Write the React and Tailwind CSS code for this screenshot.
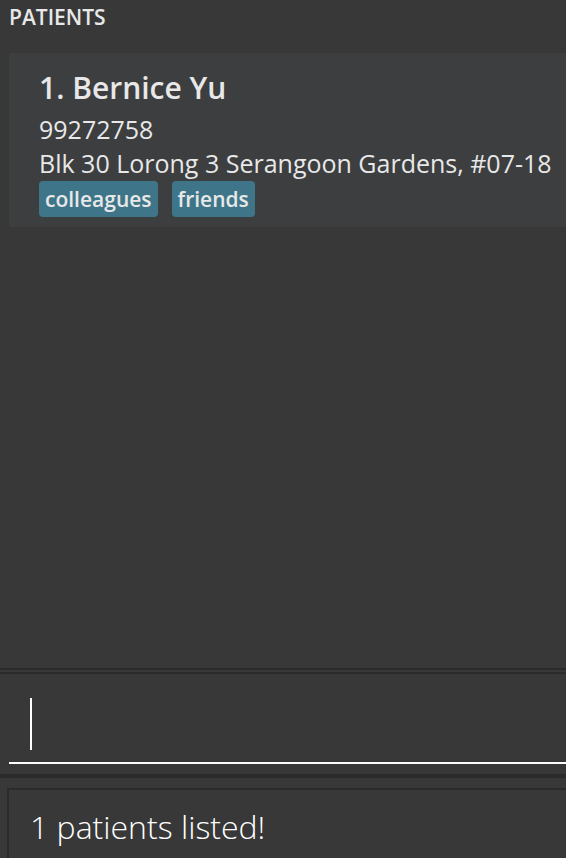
const tags = ['colleagues', 'friends'];

export default function App() {
  return (
    <main className="flex min-h-screen flex-col overflow-hidden bg-[#383838] font-['Open_Sans','Noto_Sans',sans-serif] text-[#e8e8e8]">
      <section className="flex-1 pl-[9px]">
        <h1 className="pt-1 text-[21px] leading-[26px] font-semibold">PATIENTS</h1>
        <article className="mt-[23px] h-[174px] bg-[#3c3e3f] pt-4 pl-[30px] whitespace-nowrap">
          <h2 className="text-[30px] leading-[38px] font-semibold">1. Bernice Yu</h2>
          <div className="pt-[5px] pb-px text-[25px] leading-[34px]">
            <p>99272758</p>
            <p>Blk 30 Lorong 3 Serangoon Gardens, #07-18</p>
          </div>
          <ul className="flex gap-[14px]">
            {tags.map((tag) => (
              <li key={tag} className="h-9 rounded bg-[#3e7588] px-[6px] text-[21px] leading-9 font-semibold">
                {tag}
              </li>
            ))}
          </ul>
        </article>
      </section>

      <div className="h-[6px] border-y-2 border-[#2b2b2b]" />

      <form className="pt-6 pb-[10px] pl-[9px]" onSubmit={(e) => e.preventDefault()}>
        <div className="flex h-[66px] border-b-2 border-white pl-[21px]">
          <span aria-hidden="true" className="h-[52px] w-[2px] bg-white" />
          <input
            type="text"
            aria-label="Command"
            className="h-[52px] min-w-0 flex-1 bg-transparent text-[32px] font-light text-white caret-transparent outline-none"
          />
        </div>
      </form>

      <div className="h-1 bg-[#2b2b2b]" />

      <footer className="pt-[10px] pl-[7px]">
        <output className="block h-[70px] border-t-2 border-l-2 border-[#2b2b2b] pt-3 pl-[21px] text-[32px] leading-[50px] font-light text-white">
          1 patients listed!
        </output>
      </footer>
    </main>
  );
}
